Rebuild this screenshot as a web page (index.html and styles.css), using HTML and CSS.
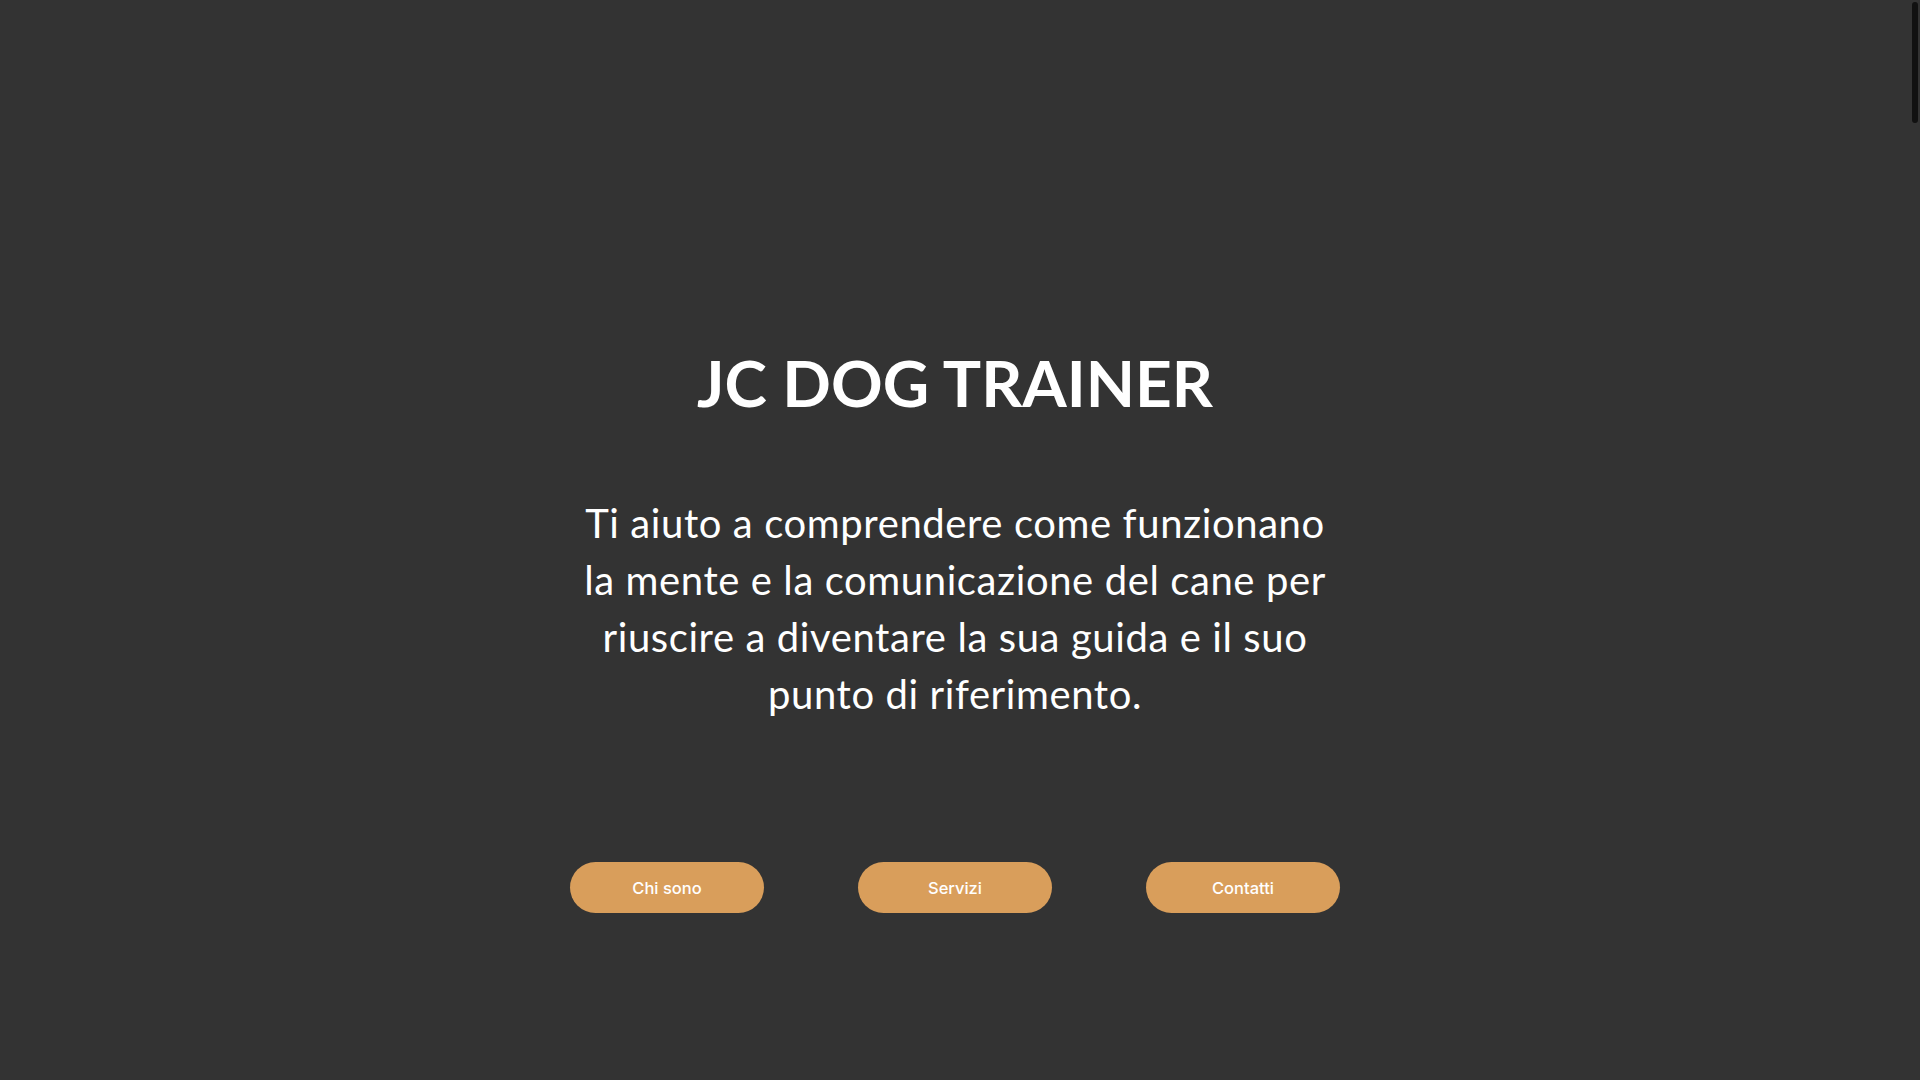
FILE: index.html
```html
<!DOCTYPE html>
<html lang="it">
<head>
<meta charset="utf-8">
<title>JC Dog Trainer</title>
<link rel="stylesheet" href="styles.css">
</head>
<body>
<main class="page">
  <section class="hero">
    <h1 class="hero-title">JC DOG TRAINER</h1>
    <p class="hero-text">Ti aiuto a comprendere come funzionano la mente e la comunicazione del cane per riuscire a diventare la sua guida e il suo punto di riferimento.</p>
    <nav class="hero-actions">
      <a class="btn" href="#chi-sono">Chi sono</a>
      <a class="btn" href="#servizi">Servizi</a>
      <a class="btn" href="#contatti">Contatti</a>
    </nav>
  </section>
</main>
<div class="scrollbar" aria-hidden="true"><div class="scrollbar-thumb"></div></div>
</body>
</html>
```

FILE: styles.css
```css
html, body {
  margin: 0;
  padding: 0;
  background: #333333;
  overflow: hidden;
}

body {
  padding-right: 10px;
}

.page {
  font-family: "Lato", "Open Sans", sans-serif;
  color: #ffffff;
}

.hero {
  height: 1080px;
  box-sizing: border-box;
  padding-top: 343px;
  display: flex;
  flex-direction: column;
  align-items: center;
}

.hero-title {
  margin: 0;
  font-family: "Lato", sans-serif;
  font-weight: 700;
  font-size: 64px;
  line-height: 80px;
  letter-spacing: 0;
  color: #ffffff;
}

.hero-text {
  margin: 72px 0 0;
  width: 760px;
  text-align: center;
  font-family: "Lato", sans-serif;
  font-weight: 400;
  font-size: 40px;
  line-height: 57px;
  letter-spacing: 0.6px;
  color: #ffffff;
}

.hero-actions {
  margin-top: 139px;
  display: flex;
  gap: 94px;
}

.btn {
  width: 194px;
  height: 51px;
  border-radius: 26px;
  background: #d99e5b;
  color: #ffffff;
  display: flex;
  align-items: center;
  justify-content: center;
  font-family: "Inter", sans-serif;
  font-size: 16.5px;
  font-weight: 500;
  text-decoration: none;
}

.scrollbar {
  position: fixed;
  top: 0;
  right: 0;
  width: 10px;
  height: 100vh;
  background: #333333;
  display: flex;
  justify-content: center;
  padding-top: 2px;
  box-sizing: border-box;
}

.scrollbar-thumb {
  width: 6px;
  height: 121px;
  border-radius: 3px;
  background: #111111;
}
```
